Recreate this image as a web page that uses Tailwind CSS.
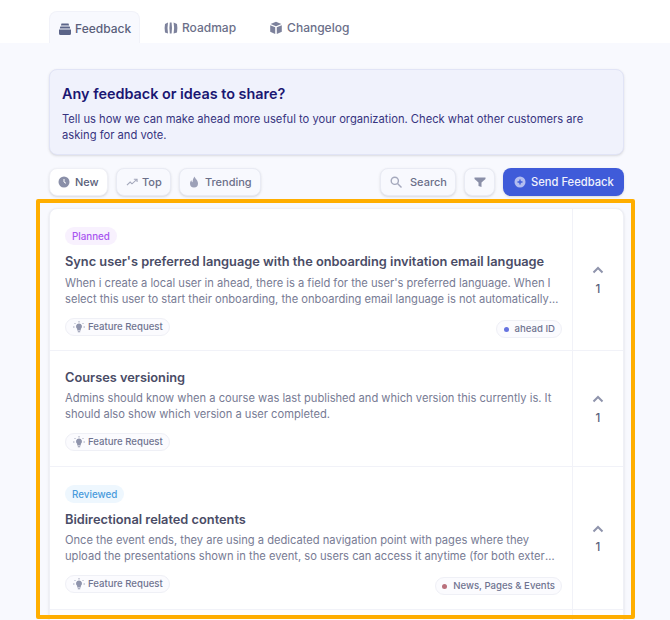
<!DOCTYPE html>
<html lang="en">
<head>
    <meta charset="UTF-8">
    <meta name="viewport" content="width=device-width, initial-scale=1.0">
    <title>Feedback</title>
    <script src="https://cdn.jsdelivr.net/npm/@tailwindcss/browser@4"></script>
</head>
<body class="font-['Inter',sans-serif]">
<div class="relative w-[670px] h-[620px] overflow-hidden bg-[#f8f9fe]">
    <nav class="flex items-end gap-[9px] h-[43px] bg-white pl-[49px]">
        <a class="flex items-center gap-[3px] w-[91px] h-[32px] pt-[2px] pl-[8px] rounded-t-lg border border-b-0 border-[#f1f2f9] bg-[#f8f9fe] text-[12px] font-medium text-[#5b5f7b]">
            <svg class="w-[14px] h-[14px]" viewBox="0 0 14 14" fill="#5b6488"><path d="M3.500 1.500h7l.6 2H2.900zM2.300 4.500h9.400l.5 2H1.800zM1 7.500h12v4a1.500 1.500 0 0 1-1.500 1.500h-9A1.500 1.500 0 0 1 1 11.500z"/></svg>
            Feedback
        </a>
        <a class="flex items-center gap-[4px] h-[32px] pt-[2px] px-[15px] text-[12px] font-medium text-[#6b6f89]">
            <svg class="w-[14px] h-[14px]" viewBox="0 0 14 14" fill="#7d829c"><path d="M1 3 4 1.500Q3 7 4 12.500L1 11.500Q.2 7 1 3zM5.800 1.500H7.600Q8.400 7 7.600 12.500H5.800Q5 7 5.800 1.500zM9.600 1.500 13 3Q13.800 7 13 11.500L9.600 12.500Q10.600 7 9.600 1.500z"/></svg>
            Roadmap
        </a>
        <a class="flex items-center gap-[4px] h-[32px] pt-[2px] pl-[9px] text-[12px] font-medium text-[#6b6f89]">
            <svg class="w-[14px] h-[14px]" viewBox="0 0 14 14" fill="#7d829c"><path d="M7 .8 12.400 3 7 5.300 1.600 3zM1.200 4.200l5 2.100V13l-5-2.200zM12.800 4.200l-5 2.100V13l5-2.200z"/></svg>
            Changelog
        </a>
    </nav>

    <main class="pl-[49px] pr-[46px] pt-[26px]">
        <section class="h-[86px] rounded-lg border border-[#e1e4f6] bg-[#f0f2fc] shadow-sm pl-[12px] pr-[30px] pt-[14px]">
            <h1 class="text-[14.400px] leading-[20px] font-semibold text-[#1a1672]">Any feedback or ideas to share?</h1>
            <p class="mt-[7px] text-[11.200px] leading-[16px] text-[#37347f]">Tell us how we can make ahead more useful to your organization. Check what other customers are asking for and vote.</p>
        </section>

        <div class="flex items-center mt-[13px] h-[28px]">
            <button class="flex items-center gap-[5px] h-[28px] w-[59px] pl-[8px] rounded-lg border border-[#eff0f6] bg-white shadow-sm text-[11px] font-medium text-[#5b5f7b]">
                <svg class="w-[12px] h-[12px]" viewBox="0 0 12 12"><circle cx="6" cy="6" r="5.500" fill="#8a8fa8"/><path d="M6 3v3l2 1.300" stroke="#fff" fill="none"/></svg>
                New
            </button>
            <button class="flex items-center gap-[4px] h-[28px] w-[55px] ml-[8px] pl-[9px] rounded-lg border border-[#e9ebf4] bg-[#f8f9fe] shadow-sm text-[11px] font-medium text-[#6b6f89]">
                <svg class="w-[12px] h-[12px]" viewBox="0 0 13 12" fill="none" stroke="#a5a9bd" stroke-width="1.200"><path d="M1 9.500 4.500 6l2 2L11.500 3.500M8.500 3h3.500v3"/></svg>
                Top
            </button>
            <button class="flex items-center gap-[5px] h-[28px] w-[82px] ml-[8px] pl-[8px] rounded-lg border border-[#e9ebf4] bg-[#f8f9fe] shadow-sm text-[11px] font-medium text-[#6b6f89]">
                <svg class="w-[12px] h-[12px]" viewBox="0 0 12 12" fill="#9da1b8"><path d="M6.500.5c.5 2 3.500 3.500 3.500 7A4 4 0 0 1 2 7.500c0-1.500.7-2.500 1.500-3.200 0 1 .4 1.700 1 2C4.500 4 5.500 2 6.500.5z"/></svg>
                Trending
            </button>
            <button class="flex items-center gap-[8px] h-[28px] w-[76px] ml-auto pl-[9px] rounded-lg border border-[#e9ebf4] bg-[#f8f9fe] shadow-sm text-[11px] font-medium text-[#6b6f89]">
                <svg class="w-[12px] h-[12px]" viewBox="0 0 12 12" fill="none" stroke="#a5a9bd" stroke-width="1.400"><circle cx="4.800" cy="4.800" r="3.600"/><path d="m7.500 7.500 4 4"/></svg>
                Search
            </button>
            <button class="flex items-center justify-center h-[28px] w-[31px] ml-[8px] rounded-lg border border-[#e9ebf4] bg-[#f8f9fe] shadow-sm">
                <svg class="w-[12px] h-[12px]" viewBox="0 0 12 12" fill="#8a8fa8"><path d="M.5 1.500h11v1.500L7.500 6.500V11L4.500 10V6.500L.5 3z"/></svg>
            </button>
            <button class="flex items-center gap-[5px] h-[28px] w-[121px] ml-[8px] pl-[11px] rounded-lg bg-[#3f5bd9] shadow-sm text-[11.200px] font-medium text-[#f0f2fc]">
                <svg class="w-[12px] h-[12px]" viewBox="0 0 12 12"><circle cx="6" cy="6" r="5.500" fill="#b3bdf0"/><path d="M6 3.500v5M3.500 6h5" stroke="#3f5bd9" stroke-width="1.400"/></svg>
                Send Feedback
            </button>
        </div>

        <div class="mt-[12px] rounded-lg border border-[#eff0f6] bg-white shadow-sm">
            <article class="flex h-[142px] border-b border-[#f1f2f8]">
                <div class="flex-1 min-w-0 flex flex-col pl-[15px] pr-[10px] pt-[18px]">
                    <span class="self-start h-[18px] px-[7px] rounded-full bg-[#f8f1fe] text-[9.800px] leading-[19px] font-medium text-[#a855f0]">Planned</span>
                    <h2 class="mt-[7px] text-[12.800px] leading-[20px] font-semibold text-[#4a4c66]">Sync user's preferred language with the onboarding invitation email language</h2>
                    <p class="mt-[3px] pr-[1px] text-[11.150px] leading-[16px] text-[#777b94] line-clamp-2">When i create a local user in ahead, there is a field for the user's preferred language. When I select this user to start their onboarding, the onboarding email language is not automatically updated to match it.</p>
                    <div class="flex justify-between mt-[11px]">
                        <span class="flex items-center gap-[3px] self-start h-[18px] pl-[7px] pr-[6px] rounded-full border border-[#eff0f6] bg-[#fbfbfe] text-[9.600px] font-medium text-[#6f7390]">
                            <svg class="w-[12px] h-[12px]" viewBox="0 0 12 12" fill="#8f94ac"><path d="M6 2.500a3 3 0 0 1 1.800 5.400V9.500H4.200V7.900A3 3 0 0 1 6 2.500zM4.800 10.200h2.400v1H4.800z"/><path d="M6 0v1.500M1.500 2l1 1M10.500 2l-1 1M0 6h1.500M10.500 6H12" stroke="#8f94ac" stroke-width=".8"/></svg>
                            Feature Request
                        </span>
                        <span class="flex items-center gap-[6px] mt-[2px] h-[18px] pl-[7px] pr-[6px] rounded-full border border-[#eff0f6] bg-[#fbfbfe] text-[9.600px] font-medium text-[#6f7390]">
                            <span class="w-[5px] h-[5px] rounded-full bg-[#6673e0]"></span>
                            ahead ID
                        </span>
                    </div>
                </div>
                <div class="flex flex-col items-center w-[51px] shrink-0 border-l border-[#f1f2f8] pt-[57px]">
                    <svg class="w-[12px] h-[8px]" viewBox="0 0 12 8" fill="none" stroke="#8f94ac" stroke-width="2"><path d="m1.500 6.500 4.500-4.500 4.500 4.500"/></svg>
                    <span class="mt-[7px] text-[11.500px] leading-[16px] font-medium text-[#5b5f7b]">1</span>
                </div>
            </article>

            <article class="flex h-[116px] border-b border-[#f1f2f8]">
                <div class="flex-1 min-w-0 flex flex-col pl-[15px] pr-[10px] pt-[17px]">
                    <h2 class="text-[12.800px] leading-[20px] font-semibold text-[#4a4c66]">Courses versioning</h2>
                    <p class="mt-[2px] pr-[1px] text-[11.150px] leading-[16px] text-[#777b94] line-clamp-2">Admins should know when a course was last published and which version this currently is. It should also show which version a user completed.</p>
                    <div class="flex justify-between mt-[11px]">
                        <span class="flex items-center gap-[3px] self-start h-[18px] pl-[7px] pr-[6px] rounded-full border border-[#eff0f6] bg-[#fbfbfe] text-[9.600px] font-medium text-[#6f7390]">
                            <svg class="w-[12px] h-[12px]" viewBox="0 0 12 12" fill="#8f94ac"><path d="M6 2.500a3 3 0 0 1 1.800 5.400V9.500H4.200V7.900A3 3 0 0 1 6 2.500zM4.800 10.200h2.400v1H4.800z"/><path d="M6 0v1.500M1.500 2l1 1M10.500 2l-1 1M0 6h1.500M10.500 6H12" stroke="#8f94ac" stroke-width=".8"/></svg>
                            Feature Request
                        </span>
                    </div>
                </div>
                <div class="flex flex-col items-center w-[51px] shrink-0 border-l border-[#f1f2f8] pt-[44px]">
                    <svg class="w-[12px] h-[8px]" viewBox="0 0 12 8" fill="none" stroke="#8f94ac" stroke-width="2"><path d="m1.500 6.500 4.500-4.500 4.500 4.500"/></svg>
                    <span class="mt-[7px] text-[11.500px] leading-[16px] font-medium text-[#5b5f7b]">1</span>
                </div>
            </article>

            <article class="flex h-[143px] border-b border-[#f1f2f8]">
                <div class="flex-1 min-w-0 flex flex-col pl-[15px] pr-[10px] pt-[18px]">
                    <span class="self-start h-[18px] px-[7px] rounded-full bg-[#eef7fe] text-[9.800px] leading-[19px] font-medium text-[#4a9bdc]">Reviewed</span>
                    <h2 class="mt-[7px] text-[12.800px] leading-[20px] font-semibold text-[#4a4c66]">Bidirectional related contents</h2>
                    <p class="mt-[2px] pr-[1px] text-[11.150px] leading-[16px] text-[#777b94] line-clamp-2">Once the event ends, they are using a dedicated navigation point with pages where they upload the presentations shown in the event, so users can access it anytime (for both external and internal users of the platform).</p>
                    <div class="flex justify-between mt-[11px]">
                        <span class="flex items-center gap-[3px] self-start h-[18px] pl-[7px] pr-[6px] rounded-full border border-[#eff0f6] bg-[#fbfbfe] text-[9.600px] font-medium text-[#6f7390]">
                            <svg class="w-[12px] h-[12px]" viewBox="0 0 12 12" fill="#8f94ac"><path d="M6 2.500a3 3 0 0 1 1.800 5.400V9.500H4.200V7.900A3 3 0 0 1 6 2.500zM4.800 10.200h2.400v1H4.800z"/><path d="M6 0v1.500M1.500 2l1 1M10.500 2l-1 1M0 6h1.500M10.500 6H12" stroke="#8f94ac" stroke-width=".8"/></svg>
                            Feature Request
                        </span>
                        <span class="flex items-center gap-[6px] mt-[2px] h-[18px] pl-[6px] pr-[6px] rounded-full border border-[#eff0f6] bg-[#fbfbfe] text-[9.600px] font-medium text-[#6f7390]">
                            <span class="w-[5px] h-[5px] rounded-full bg-[#b9707c]"></span>
                            News, Pages &amp; Events
                        </span>
                    </div>
                </div>
                <div class="flex flex-col items-center w-[51px] shrink-0 border-l border-[#f1f2f8] pt-[58px]">
                    <svg class="w-[12px] h-[8px]" viewBox="0 0 12 8" fill="none" stroke="#8f94ac" stroke-width="2"><path d="m1.500 6.500 4.500-4.500 4.500 4.500"/></svg>
                    <span class="mt-[6px] text-[11.500px] leading-[16px] font-medium text-[#5b5f7b]">1</span>
                </div>
            </article>

            <article class="flex h-[40px]">
                <div class="flex-1"></div>
                <div class="w-[51px] shrink-0 border-l border-[#f1f2f8]"></div>
            </article>
        </div>
    </main>

    <!-- orange highlight drawn over the list -->
    <div class="absolute left-[36px] top-[199px] w-[599px] h-[420px] rounded-[2px] border-[4px] border-[#ffae00] pointer-events-none"></div>
</div>
</body>
</html>
